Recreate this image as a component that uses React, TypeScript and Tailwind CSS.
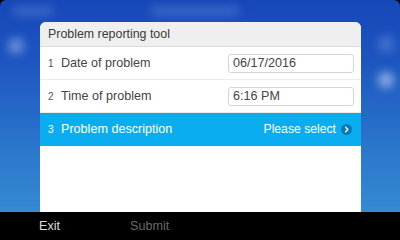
import React from 'react';

const rows = [
    { n: '1', label: 'Date of problem', value: '06/17/2016' },
    { n: '2', label: 'Time of problem', value: '6:16 PM' },
];

function Chevron() {
    return (
        <span className="flex h-[11px] w-[11px] items-center justify-center rounded-full bg-[#0a78b8]">
            <svg width="7" height="7" viewBox="0 0 8 8" fill="none">
                <path d="M3 1.5 L5.5 4 L3 6.5" stroke="#ffffff" strokeWidth="1.6" strokeLinecap="round" strokeLinejoin="round" />
            </svg>
        </span>
    );
}

export default function App() {
    return (
        <div className="h-[240px] w-[400px] overflow-hidden bg-black" style={{ fontFamily: '"Liberation Sans", Arial, sans-serif' }}>
            <div className="relative flex h-full flex-col overflow-hidden rounded-t-[6px] bg-[linear-gradient(180deg,#1747b8_0%,#1d55c0_25%,#2a75cc_60%,#3993d6_100%)]">
                {/* blurred background items */}
                <div className="absolute left-[12px] top-[6px] h-[10px] w-[42px] rounded-full bg-[#5a86d8] opacity-50 blur-[5px]" />
                <div className="absolute left-[150px] top-[6px] h-[10px] w-[90px] rounded-full bg-[#5a86d8] opacity-50 blur-[5px]" />
                <div className="absolute left-[8px] top-[38px] h-[16px] w-[16px] rounded-full bg-[#9fb9ea] opacity-60 blur-[5px]" />
                <div className="absolute left-[378px] top-[36px] h-[16px] w-[16px] rounded-full bg-[#5f8ad8] opacity-60 blur-[5px]" />
                <div className="absolute left-[378px] top-[72px] h-[16px] w-[16px] rounded-full bg-[#b9cff0] opacity-70 blur-[5px]" />

                <div className="relative ml-[40px] mt-[22px] flex w-[321px] flex-1 flex-col overflow-hidden rounded-t-[6px] bg-white">
                    <div className="flex h-[25px] items-center border-b border-[#dcdcdc] bg-[#efefef] pl-[8px] pt-[1px] text-[12.4px] text-[#3a3a3a]">
                        Problem reporting tool
                    </div>
                    {rows.map((r) => (
                        <div key={r.n} className="flex h-[33px] items-center border-b border-[#ececec] pl-[8px] pr-[7px]">
                            <span className="w-[13px] text-[10px] text-[#555]">{r.n}</span>
                            <span className="text-[12.6px] text-[#444]">{r.label}</span>
                            <div className="ml-auto flex h-[19px] w-[126px] items-center rounded-[3px] border border-[#d6d6d6] pl-[4px] text-[12.6px] text-[#444]">
                                {r.value}
                            </div>
                        </div>
                    ))}
                    <div className="flex h-[33px] items-center bg-[#0aaef0] pl-[8px] pr-[9px] text-white">
                        <span className="w-[13px] text-[10px]">3</span>
                        <span className="text-[12.6px]">Problem description</span>
                        <span className="ml-auto mr-[5px] text-[12.2px]">Please select</span>
                        <Chevron />
                    </div>
                </div>

                <div className="flex h-[28px] items-center bg-black text-[12.6px]">
                    <span className="ml-[39px] text-[#dddddd]">Exit</span>
                    <span className="ml-[70px] text-[#6a6a6a]">Submit</span>
                </div>
            </div>
        </div>
    );
}
